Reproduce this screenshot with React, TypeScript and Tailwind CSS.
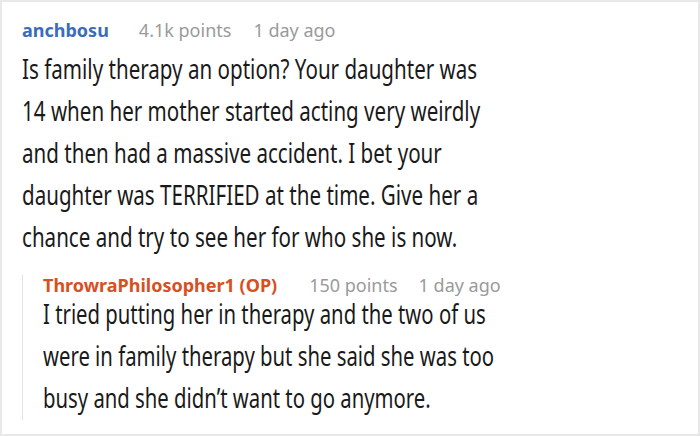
const topLines = [
  "Is family therapy an option? Your daughter was",
  "14 when her mother started acting very weirdly",
  "and then had a massive accident. I bet your",
  "daughter was TERRIFIED at the time. Give her a",
  "chance and try to see her for who she is now.",
];

const replyLines = [
  "I tried putting her in therapy and the two of us",
  "were in family therapy but she said she was too",
  "busy and she didn’t want to go anymore.",
];

export default function App() {
  return (
    <div className="w-[700px] h-[436px] bg-white border-2 border-[#e8e8e8] overflow-hidden font-['Noto_Sans',sans-serif]">
      <div className="pl-[20px] pt-[18px]">
        {/* top comment */}
        <div className="flex items-baseline text-[18px] leading-[20px]">
          <span className="font-bold text-[#3a6cbb]">anchbosu</span>
          <span className="ml-[30px] text-[#9a9a9a]">4.1k points</span>
          <span className="ml-[22px] text-[#9a9a9a]">1 day ago</span>
        </div>
        <div className="mt-[8px] origin-left scale-x-[0.762] whitespace-nowrap text-[27px] leading-[42px] text-[#1a1a1a]">
          {topLines.map((l) => (
            <div key={l}>{l}</div>
          ))}
        </div>

        {/* reply */}
        <div className="mt-[17px] border-l border-[#e2e2e2] pl-[20px] pb-[1px]">
          <div className="flex items-baseline text-[18px] leading-[20px]">
            <span className="font-bold text-[#d8501f]">ThrowraPhilosopher1 (OP)</span>
            <span className="ml-[32px] text-[#9a9a9a]">150 points</span>
            <span className="ml-[21px] text-[#9a9a9a]">1 day ago</span>
          </div>
          <div className="-mt-[2px] origin-left scale-x-[0.752] whitespace-nowrap text-[27px] leading-[42px] text-[#1a1a1a]">
            {replyLines.map((l) => (
              <div key={l}>{l}</div>
            ))}
          </div>
        </div>
      </div>
    </div>
  );
}
